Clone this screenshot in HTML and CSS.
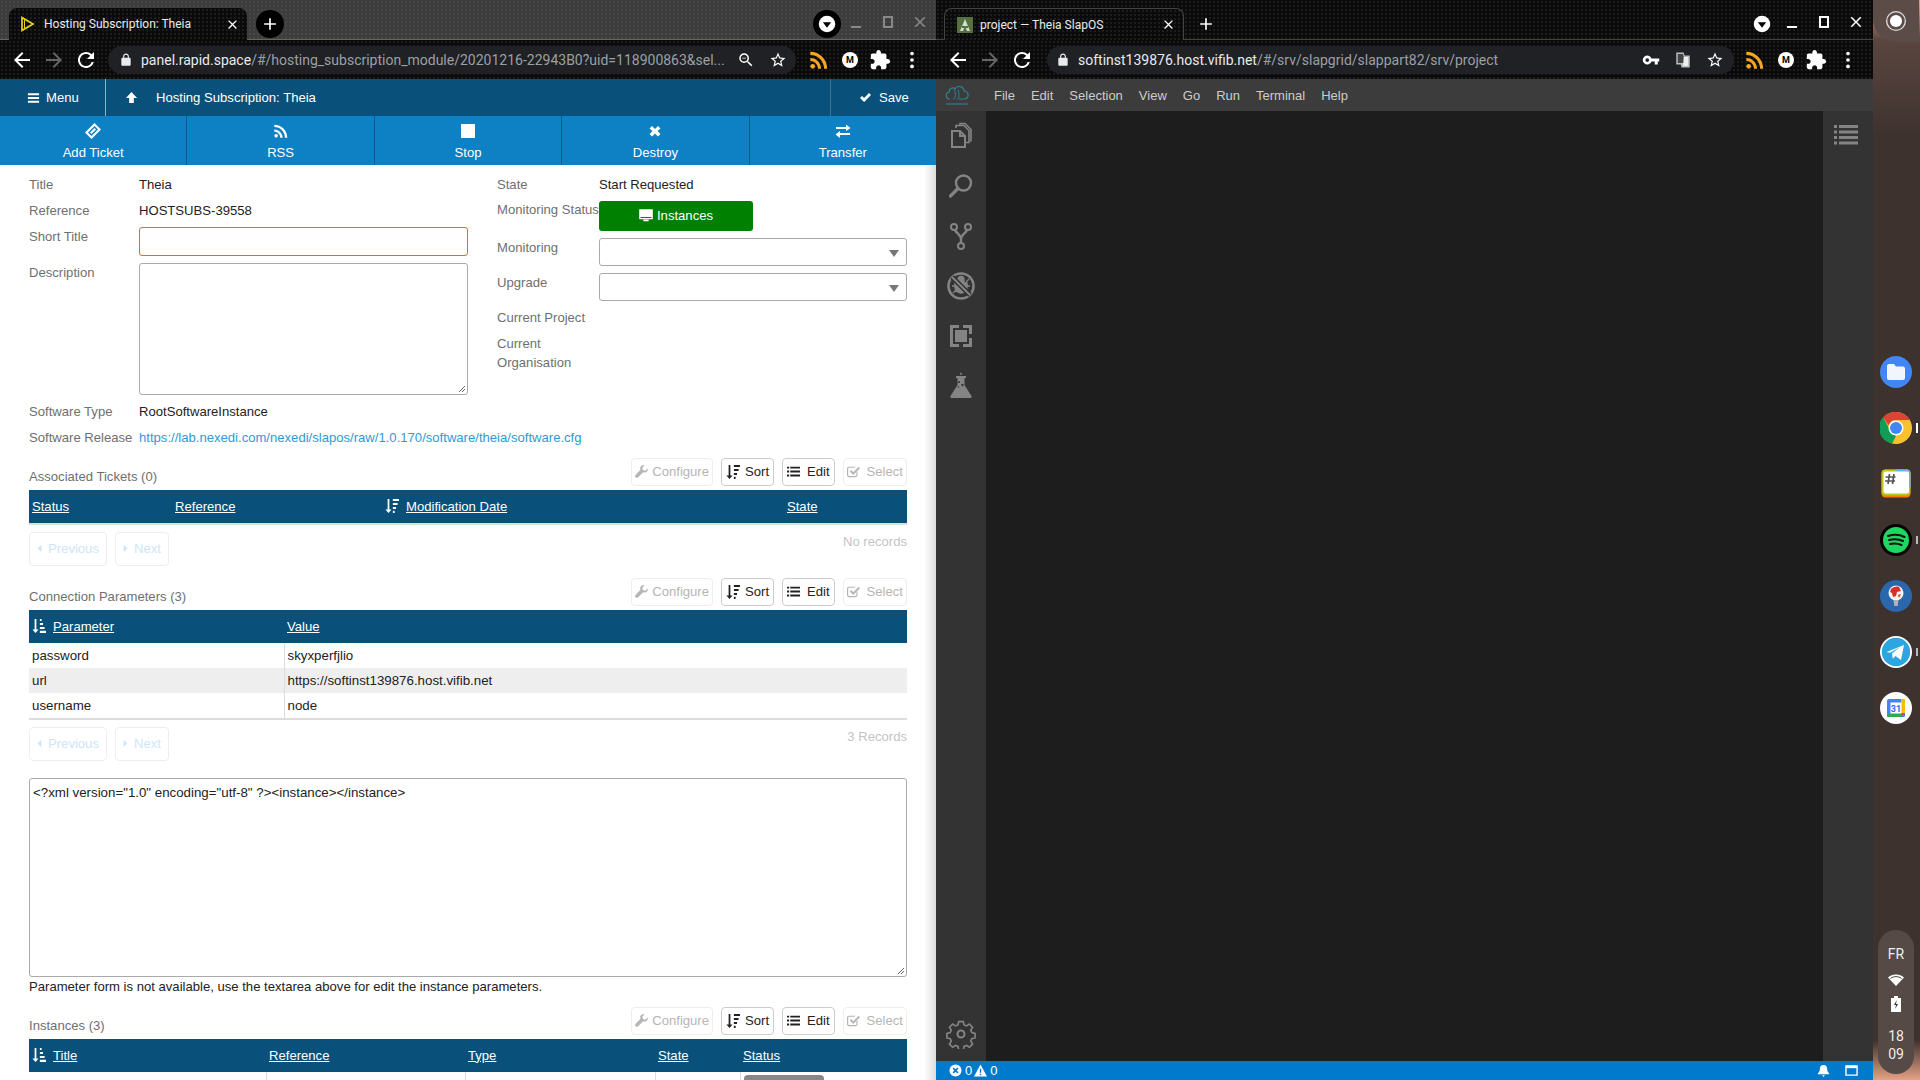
FILE: index.html
```html
<!DOCTYPE html>
<html lang="en">
<head>
<meta charset="utf-8">
<title>Hosting Subscription: Theia</title>
<link rel="stylesheet" href="styles.css">
</head>
<body>
<svg class="sprite" aria-hidden="true">
  <symbol id="back" viewBox="0 0 24 24"><path d="M20 11H7.83l5.59-5.59L12 4l-8 8 8 8 1.41-1.41L7.83 13H20v-2z"/></symbol>
  <symbol id="forward" viewBox="0 0 24 24"><path d="M12 4l-1.41 1.41L16.17 11H4v2h12.17l-5.58 5.59L12 20l8-8z"/></symbol>
  <symbol id="reload" viewBox="0 0 24 24"><path d="M17.65 6.35A7.958 7.958 0 0 0 12 4c-4.42 0-7.99 3.58-7.99 8s3.57 8 7.99 8c3.73 0 6.84-2.55 7.73-6h-2.08A5.99 5.99 0 0 1 12 18c-3.31 0-6-2.69-6-6s2.69-6 6-6c1.66 0 3.14.69 4.22 1.78L13 11h7V4l-2.35 2.35z"/></symbol>
  <symbol id="lock" viewBox="0 0 24 24"><path d="M18 8h-1V6c0-2.76-2.24-5-5-5S7 3.24 7 6v2H6c-1.1 0-2 .9-2 2v10c0 1.1.9 2 2 2h12c1.1 0 2-.9 2-2V10c0-1.1-.9-2-2-2zM9 6c0-1.66 1.34-3 3-3s3 1.34 3 3v2H9V6z"/></symbol>
  <symbol id="star" viewBox="0 0 24 24"><path d="M22 9.24l-7.19-.62L12 2 9.19 8.63 2 9.24l5.46 4.73L5.82 21 12 17.27 18.18 21l-1.63-7.03L22 9.24zM12 15.4l-3.76 2.27 1-4.28-3.32-2.88 4.38-.38L12 6.1l1.71 4.04 4.38.38-3.32 2.88 1 4.28L12 15.4z"/></symbol>
  <symbol id="puzzle" viewBox="0 0 24 24"><path d="M20.5 11H19V7c0-1.1-.9-2-2-2h-4V3.5C13 2.12 11.88 1 10.5 1S8 2.12 8 3.5V5H4c-1.1 0-1.99.9-1.99 2v3.8H3.5c1.49 0 2.7 1.21 2.7 2.7s-1.21 2.7-2.7 2.7H2V20c0 1.1.9 2 2 2h3.8v-1.5c0-1.49 1.21-2.7 2.7-2.7 1.49 0 2.7 1.21 2.7 2.7V22H17c1.1 0 2-.9 2-2v-4h1.5c1.38 0 2.5-1.12 2.5-2.5S21.88 11 20.5 11z"/></symbol>
  <symbol id="rss" viewBox="0 0 24 24"><circle cx="6.18" cy="17.82" r="2.18"/><path d="M4 4.44v2.83c7.03 0 12.73 5.7 12.73 12.73h2.83c0-8.59-6.97-15.56-15.56-15.56zm0 5.66v2.83c3.9 0 7.07 3.17 7.07 7.07h2.83c0-5.47-4.43-9.9-9.9-9.9z"/></symbol>
  <symbol id="search" viewBox="0 0 24 24"><path d="M15.5 14h-.79l-.28-.27A6.471 6.471 0 0 0 16 9.5 6.5 6.5 0 1 0 9.5 16c1.61 0 3.09-.59 4.23-1.57l.27.28v.79l5 4.99L20.49 19l-4.99-5zm-6 0C7.01 14 5 11.99 5 9.5S7.01 5 9.5 5 14 7.01 14 9.5 11.99 14 9.5 14z"/><path d="M7 9h5v1H7z"/></symbol>
  <symbol id="dots" viewBox="0 0 24 24"><circle cx="12" cy="5" r="2"/><circle cx="12" cy="12" r="2"/><circle cx="12" cy="19" r="2"/></symbol>
  <symbol id="close" viewBox="0 0 24 24"><path d="M19 6.41 17.59 5 12 10.59 6.41 5 5 6.41 10.59 12 5 17.59 6.41 19 12 13.41 17.59 19 19 17.59 13.41 12z"/></symbol>
  <symbol id="plus" viewBox="0 0 24 24"><path d="M19 13h-6v6h-2v-6H5v-2h6V5h2v6h6z"/></symbol>
  <symbol id="drop" viewBox="0 0 24 24"><circle cx="12" cy="12" r="9" fill="#fff"/><path d="M7.5 10h9L12 16z" fill="#000"/></symbol>
  <symbol id="key" viewBox="0 0 24 24"><path d="M12.65 10A6 6 0 1 0 12.65 14H17v4h4v-4h2v-4zM7 14.5a2.5 2.5 0 1 1 0-5 2.5 2.5 0 0 1 0 5z"/></symbol>
  <symbol id="translate" viewBox="0 0 24 24"><path d="M3 2h10l1 4h7v16H10l-1-4H3z" fill="#bbb"/><path d="M5 4h7l3 12H5z" fill="#444"/><path d="M13 8h6v12h-7z" fill="#eee"/></symbol>
  <symbol id="sort-d" viewBox="0 0 16 18"><path d="M3 1h2v12h2.5L4 17 .5 13H3z"/><path d="M9 1h7v2.4H9zM9 5.5h5.4v2.4H9zM9 10h3.6v2.4H9zM9 14.5h2v2.4H9z"/></symbol>
  <symbol id="sort-a" viewBox="0 0 16 18"><path d="M3 1h2v12h2.5L4 17 .5 13H3z"/><path d="M9 1h2v2.4H9zM9 5.500h3.600v2.400H9zM9 10h5.400v2.400H9zM9 14.500h7v2.400H9z"/></symbol>
  <symbol id="list" viewBox="0 0 16 16"><path d="M0 2h2.600v2.400H0zM4 2h12v2.400H4zM0 6.800h2.600v2.400H0zM4 6.800h12v2.400H4zM0 11.600h2.600V14H0zM4 11.600h12V14H4z"/></symbol>
  <symbol id="wrench" viewBox="0 0 16 16"><path d="M15.500 4.200 12.600 7 9.700 6.200 9 3.400 11.800.5C9.700-.2 7.500.5 6.700 2.400c-.5 1.100-.4 2.400.1 3.400L.8 12c-.9 1-.9 2.300 0 3.100.9.900 2.200.8 3.100 0l6.100-6.200c1.100.5 2.400.5 3.500 0 1.800-.9 2.600-2.800 2-4.700z"/></symbol>
  <symbol id="checkbox" viewBox="0 0 16 16"><path d="M2.500 2h8l-1.400 1.400H2.500c-.6 0-1 .4-1 1v8.100c0 .6.400 1 1 1h8.100c.6 0 1-.4 1-1V9l1.400-1.400v5c0 1.300-1.100 2.400-2.400 2.400H2.500C1.100 15 0 13.900 0 12.600V4.400C0 3.100 1.100 2 2.500 2z"/><path d="M14.400 2.300 16 3.900 7.700 12.200 3.400 7.900 5 6.300l2.700 2.700z"/></symbol>
  <symbol id="caret-l" viewBox="0 0 8 14"><path d="M7 1v12L1 7z"/></symbol>
  <symbol id="caret-r" viewBox="0 0 8 14"><path d="M1 1v12l6-6z"/></symbol>
</svg>

<main class="desktop">

  <section class="window win-left">
    <div class="tabstrip strip-grey">
      <div class="tab tab-left">
        <svg class="favicon" viewBox="0 0 16 16"><path d="M3 1.500v13L14 8z" fill="none" stroke="#e6d31c" stroke-width="1.700"/><path d="M5.500 4v8" stroke="#e6d31c" stroke-width="1"/></svg>
        <span class="tab-title">Hosting Subscription: Theia</span>
        <svg class="ico tab-x"><use href="#close"/></svg>
      </div>
      <span class="newtab"><svg class="ico"><use href="#plus"/></svg></span>
      <div class="winctl winctl-dim">
        <span class="dropcircle"><svg class="ico ico-drop"><use href="#drop"/></svg></span>
        <span class="ctl-min"></span>
        <span class="ctl-max"></span>
        <svg class="ico ctl-x"><use href="#close"/></svg>
      </div>
    </div>
    <div class="toolbar">
      <svg class="ico nav-i nav-first"><use href="#back"/></svg>
      <svg class="ico nav-i dim"><use href="#forward"/></svg>
      <svg class="ico nav-i"><use href="#reload"/></svg>
      <div class="omnibox omni-left">
        <svg class="ico lock"><use href="#lock"/></svg>
        <span class="url"><b>panel.rapid.space</b>/#/hosting_subscription_module/20201216-22943B0?uid=118900863&amp;sel...</span>
        <svg class="ico omni-i omni-push"><use href="#search"/></svg>
        <svg class="ico omni-i"><use href="#star"/></svg>
      </div>
      <svg class="ico ext rssi"><use href="#rss"/></svg>
      <span class="ext mcircle">M</span>
      <svg class="ico ext"><use href="#puzzle"/></svg>
      <svg class="ico ext"><use href="#dots"/></svg>
    </div>

    <header class="apphead">
      <div class="menu-btn"><svg class="fa-list" viewBox="0 0 14 12"><path d="M1 1h12v2H1zM1 5h12v2H1zM1 9h12v2H1z"/></svg>Menu</div>
      <div class="page-title">
        <svg class="up" viewBox="0 0 14 14"><path d="M7 1l6 6.500H9.500V13h-5V7.500H1z"/></svg>
        <span>Hosting Subscription: Theia</span>
      </div>
      <div class="save-btn"><svg class="check" viewBox="0 0 14 12"><path d="M1 6.500 3.200 4.300l2.300 2.300L10.800 1 13 3.200 5.500 11z"/></svg>Save</div>
    </header>
    <nav class="appnav">
      <div class="nav-cell"><svg class="nav-ico" viewBox="0 0 16 16"><path d="M9.500 0 16 6.500 6.500 16 0 9.500zM9.500 3 3 9.500 6.500 13 13 6.500z" fill-rule="evenodd"/><path d="M9.500 5 11 6.500 6.500 11 5 9.500z"/></svg><span>Add Ticket</span></div>
      <div class="nav-cell"><svg class="nav-ico nav-rss" viewBox="0 0 24 24"><use href="#rss"/></svg><span>RSS</span></div>
      <div class="nav-cell"><svg class="nav-ico" viewBox="0 0 16 16"><rect x="1" y="1" width="14" height="14"/></svg><span>Stop</span></div>
      <div class="nav-cell"><svg class="nav-ico" viewBox="0 0 16 16"><path d="M5 3 8 6l3-3 2.500 2.500-3 2.500 3 3L11 13.500l-3-3-3 3L2.500 11l3-3-3-2.500z"/></svg><span>Destroy</span></div>
      <div class="nav-cell"><svg class="nav-ico" viewBox="0 0 16 16"><path d="M1 4h10V1.500L15.500 5 11 8V6H1zM15 10H5V8L.5 11.500 5 15v-3h10z"/></svg><span>Transfer</span></div>
    </nav>

    <div class="page">
      <div class="form">
        <div class="col">
          <div class="row row-text"><span class="lbl">Title</span><span class="val">Theia</span></div>
          <div class="row row-text"><span class="lbl">Reference</span><span class="val">HOSTSUBS-39558</span></div>
          <div class="row row-short"><span class="lbl lbl-up">Short Title</span><span class="input input-focus"></span></div>
          <div class="row row-desc"><span class="lbl lbl-up">Description</span><span class="input textarea"><svg class="grip" viewBox="0 0 8 8"><path d="M7 1 1 7M7 4 4 7" stroke="#666" fill="none"/></svg></span></div>
        </div>
        <div class="col col-r">
          <div class="row row-text"><span class="lbl">State</span><span class="val">Start Requested</span></div>
          <div class="row row-status"><span class="lbl">Monitoring Status</span><span class="btn-green"><svg class="monitor" viewBox="0 0 16 16"><path d="M1 1h14v10H1z" fill="none" stroke="#fff" stroke-width="1.500"/><path d="M1 1h14v8H1zM5 12h6v2H5z" fill="#fff"/></svg>Instances</span></div>
          <div class="row row-sel"><span class="lbl lbl-flat">Monitoring</span><span class="select"><i class="tri"></i></span></div>
          <div class="row row-sel"><span class="lbl lbl-flat">Upgrade</span><span class="select"><i class="tri"></i></span></div>
          <div class="row row-sel"><span class="lbl lbl-flat">Current Project</span></div>
          <div class="row row-org"><span class="lbl lbl-two">Current<br>Organisation</span></div>
        </div>
      </div>
      <div class="wide-rows">
        <div class="row"><span class="lbl">Software Type</span><span class="val">RootSoftwareInstance</span></div>
        <div class="row"><span class="lbl">Software Release</span><a class="link">https://lab.nexedi.com/nexedi/slapos/raw/1.0.170/software/theia/software.cfg</a></div>
      </div>

      <div class="sec sec-first">
        <div class="sec-head">
          <span class="sec-title">Associated Tickets (0)</span>
          <div class="tools">
            <span class="tbtn off"><svg class="ti"><use href="#wrench"/></svg>Configure</span>
            <span class="tbtn"><svg class="ti ti-sort"><use href="#sort-d"/></svg>Sort</span>
            <span class="tbtn"><svg class="ti"><use href="#list"/></svg>Edit</span>
            <span class="tbtn off"><svg class="ti"><use href="#checkbox"/></svg>Select</span>
          </div>
        </div>
        <table class="tbl t-tickets">
          <thead><tr>
            <th class="c1"><u>Status</u></th><th class="c2"><u>Reference</u></th>
            <th class="c3"><svg class="th-sort"><use href="#sort-d"/></svg><u>Modification Date</u></th><th><u>State</u></th>
          </tr></thead>
        </table>
        <div class="tbl-end"></div>
        <div class="pager">
          <span class="pbtn"><svg class="car"><use href="#caret-l"/></svg>Previous</span>
          <span class="pbtn"><svg class="car"><use href="#caret-r"/></svg>Next</span>
          <span class="records">No records</span>
        </div>
      </div>

      <div class="sec">
        <div class="sec-head">
          <span class="sec-title">Connection Parameters (3)</span>
          <div class="tools">
            <span class="tbtn off"><svg class="ti"><use href="#wrench"/></svg>Configure</span>
            <span class="tbtn"><svg class="ti ti-sort"><use href="#sort-d"/></svg>Sort</span>
            <span class="tbtn"><svg class="ti"><use href="#list"/></svg>Edit</span>
            <span class="tbtn off"><svg class="ti"><use href="#checkbox"/></svg>Select</span>
          </div>
        </div>
        <table class="tbl t-params">
          <thead><tr><th class="c1"><svg class="th-sort"><use href="#sort-a"/></svg><u>Parameter</u></th><th><u>Value</u></th></tr></thead>
          <tbody>
            <tr><td>password</td><td>skyxperfjlio</td></tr>
            <tr class="alt"><td>url</td><td>https://softinst139876.host.vifib.net</td></tr>
            <tr><td>username</td><td>node</td></tr>
          </tbody>
        </table>
        <div class="tbl-end"></div>
        <div class="pager">
          <span class="pbtn"><svg class="car"><use href="#caret-l"/></svg>Previous</span>
          <span class="pbtn"><svg class="car"><use href="#caret-r"/></svg>Next</span>
          <span class="records">3 Records</span>
        </div>
      </div>

      <div class="xml">&lt;?xml version="1.0" encoding="utf-8" ?&gt;&lt;instance&gt;&lt;/instance&gt;<svg class="grip" viewBox="0 0 8 8"><path d="M7 1 1 7M7 4 4 7" stroke="#666" fill="none"/></svg></div>
      <p class="note">Parameter form is not available, use the textarea above for edit the instance parameters.</p>

      <div class="sec sec-inst">
        <div class="sec-head">
          <span class="sec-title">Instances (3)</span>
          <div class="tools">
            <span class="tbtn off"><svg class="ti"><use href="#wrench"/></svg>Configure</span>
            <span class="tbtn"><svg class="ti ti-sort"><use href="#sort-d"/></svg>Sort</span>
            <span class="tbtn"><svg class="ti"><use href="#list"/></svg>Edit</span>
            <span class="tbtn off"><svg class="ti"><use href="#checkbox"/></svg>Select</span>
          </div>
        </div>
        <table class="tbl t-inst">
          <thead><tr>
            <th class="c1"><svg class="th-sort"><use href="#sort-a"/></svg><u>Title</u></th><th class="c2"><u>Reference</u></th><th class="c3"><u>Type</u></th><th class="c4"><u>State</u></th><th><u>Status</u></th>
          </tr></thead>
          <tbody><tr><td></td><td></td><td></td><td></td><td><span class="badge"></span></td></tr></tbody>
        </table>
      </div>
    </div>
  </section>

  <section class="window win-right">
    <div class="tabstrip strip-black">
      <div class="tab tab-right">
        <svg class="favicon" viewBox="0 0 16 16"><rect width="16" height="16" fill="#56703f"/><path d="M8 2 3 14h3l2-5 2 5h3z" fill="#cfe0d0"/><rect x="5" y="9" width="6" height="2" fill="#56703f"/></svg>
        <span class="tab-title">project — Theia SlapOS</span>
        <svg class="ico tab-x"><use href="#close"/></svg>
      </div>
      <svg class="ico newtab-plain"><use href="#plus"/></svg>
      <div class="winctl">
        <svg class="ico ico-drop"><use href="#drop"/></svg>
        <span class="ctl-min"></span>
        <span class="ctl-max"></span>
        <svg class="ico ctl-x"><use href="#close"/></svg>
      </div>
    </div>
    <div class="toolbar">
      <svg class="ico nav-i nav-first"><use href="#back"/></svg>
      <svg class="ico nav-i dim"><use href="#forward"/></svg>
      <svg class="ico nav-i"><use href="#reload"/></svg>
      <div class="omnibox omni-right">
        <svg class="ico lock"><use href="#lock"/></svg>
        <span class="url"><b>softinst139876.host.vifib.net</b>/#/srv/slapgrid/slappart82/srv/project</span>
        <svg class="ico omni-i omni-push"><use href="#key"/></svg>
        <svg class="ico omni-i"><use href="#translate"/></svg>
        <svg class="ico omni-i"><use href="#star"/></svg>
      </div>
      <svg class="ico ext rssi"><use href="#rss"/></svg>
      <span class="ext mcircle">M</span>
      <svg class="ico ext"><use href="#puzzle"/></svg>
      <svg class="ico ext"><use href="#dots"/></svg>
    </div>

    <div class="theia">
      <div class="menubar">
        <svg class="slap" viewBox="0 0 26 26"><path d="M6 17C1.500 17 1 11 5 10c0-4 4-5 6-3 2-4 9-3 9 2 5 0 6 8 0 8h-5" fill="none" stroke="#2a8494" stroke-width="1.200"/><path d="M9 17c3 0 3-6 1-9M13 17c3 0 2-6 1-9" fill="none" stroke="#2a8494" stroke-width="1"/><rect x="2" y="21" width="22" height="2" fill="#2a8494" opacity=".55"/></svg>
        <span class="mi">File</span><span class="mi">Edit</span><span class="mi">Selection</span><span class="mi">View</span><span class="mi">Go</span><span class="mi">Run</span><span class="mi">Terminal</span><span class="mi">Help</span>
      </div>
      <div class="theia-main">
        <aside class="activity">
          <svg class="act" viewBox="0 0 28 28"><path d="M5 9h8l5 5v11H5z M13 9v5h5" fill="none" stroke-width="2"/><path d="M9 6V3.500h8l5 5v12h-3M13 3V1.500h5l6 6v12" fill="none" stroke-width="1.600"/></svg>
          <svg class="act" viewBox="0 0 28 28"><circle cx="16.500" cy="11" r="7.500" fill="none" stroke-width="2.400"/><path d="M11 16.500 3.500 24" fill="none" stroke-width="3.200" stroke-linecap="round"/></svg>
          <svg class="act" viewBox="0 0 28 28"><circle cx="7" cy="5" r="3" fill="none" stroke-width="2"/><circle cx="21" cy="5" r="3" fill="none" stroke-width="2"/><circle cx="14" cy="24" r="3" fill="none" stroke-width="2"/><path d="M8 8c1 3 6 5 6 9v4M20 8c-1 3-6 5-6 9" fill="none" stroke-width="2.400"/></svg>
          <svg class="act act-big" viewBox="0 0 30 30"><circle cx="15" cy="15" r="12.500" fill="none" stroke-width="2.600"/><path d="M12 8.500a3 3 0 0 1 6 0v2h-6zM9 12h12c1 4 0 9-6 10-6-1-7-6-6-10zM7 8l3 3M23 8l-3 3M6 15h3M24 15h-3M7 22l3-3M23 22l-3-3" stroke-width="1.300"/><path d="M6 6l18 18" fill="none" stroke="#333" stroke-width="5"/><path d="M6 6l18 18" fill="none" stroke-width="2"/></svg>
          <svg class="act" viewBox="0 0 28 28"><path d="M3 3h9v3H6v16h6v3H3zM16 3h9v9h-3V6h-6zM25 16v9h-9v-3h6v-6z" class="solid"/><rect x="8" y="8" width="12" height="12" class="solid"/></svg>
          <svg class="act" viewBox="0 0 28 28"><path d="M9 4h10v2h-1.500v7l7 11c.600 1-.100 2-1 2H4.500c-.900 0-1.600-1-1-2l7-11V6H9z" class="solid"/><circle cx="14" cy="1.800" r="1" class="solid"/><circle cx="12" cy="10" r="1" fill="#333" class="solid"/><circle cx="15.500" cy="13" r="1.200" fill="#333" class="solid"/><circle cx="11.500" cy="15" r=".8" fill="#333" class="solid"/></svg>
          <svg class="act act-gear" viewBox="0 0 30 30"><path d="M12.500 1.500h5l.8 3.600 2.700 1.100 3.100-2 3.500 3.500-2 3.100 1.100 2.700 3.600.8v5l-3.600.8-1.100 2.700 2 3.100-3.500 3.500-3.100-2-2.700 1.100-.8 3.600h-5l-.8-3.600-2.700-1.100-3.100 2-3.500-3.500 2-3.100-1.100-2.700-3.600-.8v-5l3.600-.8 1.100-2.700-2-3.100 3.500-3.500 3.100 2 2.700-1.100z" fill="none" stroke-width="1.800" transform="translate(1.200 1.200) scale(.92)"/><circle cx="15" cy="15" r="3.500" fill="none" stroke-width="2"/></svg>
        </aside>
        <div class="editor"></div>
        <aside class="rightbar">
          <svg class="outline" viewBox="0 0 24 20"><path d="M0 0h3v3H0zM5 0h19v3H5zM0 5.500h3v3H0zM5 5.500h19v3H5zM0 11h3v3H0zM5 11h19v3H5zM0 16.500h3v3H0zM5 16.500h19v3H5z"/></svg>
        </aside>
      </div>
      <footer class="statusbar">
        <svg class="st st-first" viewBox="0 0 14 14"><circle cx="7" cy="7" r="6.500" fill="#fff"/><path d="m4.500 4.500 5 5m0-5-5 5" stroke="#007acc" stroke-width="1.800"/></svg><span class="st-n">0</span>
        <svg class="st" viewBox="0 0 14 14"><path d="M7 .5 14 13.500H0z" fill="#fff"/><path d="M7 5v4.500M7 10.500v1.500" stroke="#007acc" stroke-width="1.500"/></svg><span class="st-n">0</span>
        <svg class="st st-bell" viewBox="0 0 14 14"><path d="M7 1c-3 0-4 2-4 5 0 2-1 3-2 4v1h12v-1c-1-1-2-2-2-4 0-3-1-5-4-5zM5.500 12h3L7 14z" fill="#fff"/></svg>
        <svg class="st st-win" viewBox="0 0 14 12"><path d="M1 1h12v10H1z" fill="none" stroke="#fff" stroke-width="1.500"/><path d="M1 1h12v2.500H1z" fill="#fff"/></svg>
      </footer>
    </div>
  </section>

  <aside class="shelf">
    <div class="launcher"><svg viewBox="0 0 20 20" class="launch-i"><circle cx="10" cy="10" r="8.500" fill="none" stroke="#ddd" stroke-width="1.200"/><circle cx="10" cy="10" r="5.500" fill="#fff"/></svg></div>
    <div class="apps">
      <svg class="app" viewBox="0 0 32 32"><circle cx="16" cy="16" r="16" fill="#4285f4"/><path d="M7 10c0-1 .8-2 2-2h5l2 2.500h7c1 0 2 1 2 2V22c0 1-1 2-2 2H9c-1.200 0-2-1-2-2z" fill="#f1f5fd"/></svg>
      <span class="app-wrap"><svg class="app" viewBox="0 0 32 32"><circle cx="16" cy="16" r="16" fill="#fbc02d"/><path d="M16 0a16 16 0 0 1 13.900 8H16a8 8 0 0 0-7.500 5.200L3 5.200A16 16 0 0 1 16 0z" fill="#db4437"/><path d="M3 5.200l6 10.800 7 8-3.800 7.600A16 16 0 0 1 3 5.200z" fill="#0f9d58"/><circle cx="16" cy="16" r="7.500" fill="#fff"/><circle cx="16" cy="16" r="6" fill="#4285f4"/></svg><i class="pip pip-on"></i></span>
      <svg class="app" viewBox="0 0 32 32"><rect x="1.500" y="1.500" width="29" height="28" rx="4" fill="#f57c00"/><rect x="1.500" y="1.500" width="29" height="26" rx="4" fill="#b4c91a"/><path d="M16 1.500h10.500a4 4 0 0 1 4 4V20H16z" fill="#64b5f6"/><rect x="3.500" y="3.500" width="25.500" height="22" rx="2" fill="#fff"/><path d="M9.500 6 8 16M14 6l-1.500 10M5.500 9h10M5 13h10" stroke="#555" stroke-width="1.700" fill="none"/></svg>
      <span class="app-wrap"><svg class="app" viewBox="0 0 32 32"><circle cx="16" cy="16" r="16" fill="#000"/><circle cx="16" cy="16" r="13" fill="#1ed760"/><path d="M8 12c5-1.500 12-1.300 16.500 1M9 16c4-1 10-1 14 1M10 20c3.500-.800 8-.600 11.500 1" stroke="#111" stroke-width="2" stroke-linecap="round" fill="none"/></svg><i class="pip"></i></span>
      <svg class="app" viewBox="0 0 32 32"><circle cx="16" cy="16" r="16" fill="#2a67ad"/><circle cx="16" cy="13" r="7.500" fill="#f4f4f4"/><path d="M11 9c2-2 6-3 8-2l2 4-4 1-1 4-3 1-1-4-2-1zM18 15l3-1-2 4z" fill="#d93025"/><path d="M13.500 20h5l-.8 6h-3.400z" fill="#b0b4ba"/></svg>
      <span class="app-wrap"><svg class="app" viewBox="0 0 32 32"><circle cx="16" cy="16" r="16" fill="#fff"/><circle cx="16" cy="16" r="14.200" fill="#2ca5e0"/><path d="M6.500 16 24 9l-3 15-5.500-4-2.700 2.800-.8-5.300 8-6.500-10 5.800z" fill="#fff"/></svg><i class="pip"></i></span>
      <svg class="app" viewBox="0 0 32 32"><circle cx="16" cy="16" r="16" fill="#fff"/><rect x="7" y="7" width="18" height="18" rx="1.500" fill="#4285f4"/><path d="M21 7h4v4h-4z" fill="#fbbc04"/><path d="M21 11h4v10h-4z" fill="#fbbc04"/><path d="M7 21h14v4H8.500A1.500 1.500 0 0 1 7 23.500z" fill="#34a853"/><path d="M21 21h4l-4 4z" fill="#ea4335"/><rect x="10.500" y="10.500" width="11" height="11" fill="#fff"/><text x="16" y="19.500" class="cal">31</text></svg>
    </div>
    <div class="tray">
      <span class="tray-lang">FR</span>
      <svg class="tray-i" viewBox="0 0 16 12"><path d="M0 3.500C4-.5 12-.5 16 3.500L8 12z" fill="#fff"/><path d="M2.500 4.500c3-2.500 8-2.500 11 0" stroke="#4a3f3b" stroke-width="1" fill="none"/></svg>
      <svg class="tray-b" viewBox="0 0 10 16"><path d="M3 0h4v2h3v14H0V2h3z" fill="#fff"/><path d="M5.800 4 3 9h2l-.800 4L7 8H5z" fill="#333"/></svg>
      <span class="tray-time">18<br>09</span>
    </div>
  </aside>
</main>
</body>
</html>
```

FILE: styles.css
```css
* { box-sizing: border-box; }
html, body { margin: 0; height: 100%; overflow: hidden; }
body { font-family: "Liberation Sans", Arial, sans-serif; font-size: 13.1px; background: #3d322e; }
.sprite { display: none; }
.desktop { position: relative; width: 1920px; height: 1080px; overflow: hidden; }

.window { position: absolute; top: 0; height: 1080px; display: flex; flex-direction: column; overflow: hidden; }
.win-left { left: 0; width: 936px; }
.win-right { left: 936px; width: 937px; }

.ico { display: block; width: 20px; height: 20px; fill: #fff; flex: none; }

/* browser chrome */
.tabstrip { height: 40px; display: flex; align-items: flex-end; position: relative; flex: none; }
.strip-grey { background-color: #3d3d3d; background-image: radial-gradient(rgba(255,255,255,.05) 1px, transparent 1.2px); background-size: 4px 4px; border-bottom: 1px solid #666; }
.strip-black { background-color: #0a0a0a; background-image: radial-gradient(#1d1d1d 1px, transparent 1.2px); background-size: 4px 4px; border-bottom: 1px solid #444; }
.tab { height: 32px; display: flex; align-items: center; border-radius: 8px 8px 0 0; color: #e8eaed; font: 12px Roboto, sans-serif; background-color: #0a0a0a; background-image: radial-gradient(#1d1d1d 1px, transparent 1.2px); background-size: 4px 4px; position: relative; top: 1px; }
.tab-left { margin-left: 9px; width: 238px; padding-left: 10px; }
.tab-right { margin-left: 8px; width: 240px; padding-left: 12px; border: 1px solid #444; border-bottom: none; }
.favicon { width: 16px; height: 16px; flex: none; margin-right: 7px; }
.tab-left .favicon { margin-right: 9px; }
.tab-title { white-space: nowrap; }
.tab-x { width: 15px; height: 15px; margin-left: auto; margin-right: 7px; }
.newtab { width: 28px; height: 28px; border-radius: 50%; background: #000; margin: 8px 0 0 9px; display: flex; align-items: center; justify-content: center; align-self: center; }
.newtab-plain { margin: 8px 0 0 12px; align-self: center; }
.winctl { margin: 8px 0 0 auto; display: flex; align-items: center; align-self: center; padding-right: 7px; }
.dropcircle { width: 28px; height: 28px; border-radius: 50%; background: #000; display: flex; align-items: center; justify-content: center; margin-right: 1px; }
.ico-drop { width: 22px; height: 22px; }
.ctl-min { width: 10px; height: 2px; background: #fff; margin: 6px 0 0 9px; }
.ctl-max { width: 10px; height: 12px; border: 2px solid #fff; margin: -4px 0 0 22px; }
.ctl-x { width: 18px; height: 18px; margin: -4px 0 0 18px; }
.winctl-dim .ctl-min { background: #888; margin-left: 9px; }
.winctl-dim .ctl-max { border-color: #888; }
.winctl-dim .ctl-x { fill: #888; }
.win-right .winctl { padding-right: 8px; }
.win-right .ico-drop { margin-right: 5px; }

.toolbar { height: 39px; flex: none; display: flex; align-items: center; background-color: #0a0a0a; background-image: radial-gradient(#1d1d1d 1px, transparent 1.2px); background-size: 4px 4px; padding-right: 11px; }
.nav-i { width: 24px; height: 24px; margin-right: 8px; }
.nav-first { margin-left: 10px; }
.nav-i.dim { fill: #666; }
.omnibox { height: 28px; border-radius: 14px; background: #202124; display: flex; align-items: center; padding: 0 9px 0 10px; color: #9aa0a6; font: 14px Roboto, sans-serif; flex: none; margin-left: 2px; }
.omni-left { width: 688px; margin-right: 10px; }
.omni-right { width: 687px; margin-right: 8px; margin-left: 5px; padding-right: 10px; padding-left: 8px; }
.lock { width: 14px; height: 14px; margin: 0 8px 0 1px; fill: #e8eaed; }
.url { white-space: nowrap; color: #9aa0a6; font-size: 14px; }
.url b { font-weight: 400; color: #e8eaed; }
.omni-i { width: 18px; height: 18px; margin-left: 14px; }
.omni-push { margin-left: auto; }
.ext { width: 22px; height: 22px; margin-right: 10px; }
.ext:last-child { margin-right: 0; }
.rssi { fill: #f6a623; width: 26px; height: 26px; margin-right: 8px; }
.mcircle { width: 16px; height: 16px; flex: none; border-radius: 50%; background: #fff; color: #000; font: 700 9px/16px Roboto, sans-serif; text-align: center; margin: 0 11px 0 2px; }

/* app bars */
.apphead { height: 37px; flex: none; background: #09517a; color: #fff; display: flex; align-items: stretch; line-height: 36px; }
.menu-btn { width: 106px; display: flex; align-items: center; padding-left: 27px; border-right: 1px solid #8fb2c8; }
.fa-list { width: 13px; height: 12px; fill: #fff; margin-right: 6px; }
.page-title { display: flex; align-items: center; flex: 1; padding-left: 19px; }
.up { width: 13px; height: 13px; fill: #fff; margin-right: 18px; }
.save-btn { width: 106px; border-left: 1px solid #3a7598; display: flex; align-items: center; padding-left: 28px; }
.check { width: 13px; height: 11px; fill: #fff; margin-right: 7px; }
.appnav { height: 49px; flex: none; background: #0e80c4; display: flex; color: #fff; }
.nav-cell { flex: 1; display: flex; flex-direction: column; align-items: center; border-right: 1px solid #0a5a8c; padding-top: 7px; }
.nav-cell:last-child { border-right: none; }
.nav-cell span { margin-top: 6px; line-height: 16px; }
.nav-ico { width: 16px; height: 16px; fill: #fff; display: block; }
.nav-rss { width: 20px; height: 20px; margin: -2px 0; }

/* page */
.page { flex: 1; overflow: hidden; background: linear-gradient(to right, #fff 924px, #dcdcdc 936px); padding: 6px 29px 0; color: #222; }
.form { display: flex; }
.col { width: 439px; }
.col-r { margin-left: 29px; width: 410px; }
.row { display: flex; height: 26px; line-height: 26px; }
.row-text { line-height: 27px; }
.lbl { width: 110px; flex: none; color: #6f6f6f; white-space: nowrap; }
.col-r .lbl { width: 102px; }
.val { color: #222; }
.row-short { height: 29px; margin-top: 4px; }
.row-desc { height: 132px; margin-top: 7px; }
.lbl-up { line-height: 20px; }
.input { display: block; width: 329px; height: 100%; border: 1px solid #aaa; border-radius: 3px; background: #fff; position: relative; }
.input-focus { border: 1.500px solid #f60; }
.grip { position: absolute; right: 1px; bottom: 1px; width: 8px; height: 8px; }
.row-status { height: 34px; }
.btn-green { margin-top: 4px; height: 30px; width: 154px; background: #008000; color: #fff; border-radius: 3px; display: flex; align-items: center; justify-content: center; line-height: 30px; }
.monitor { width: 14px; height: 14px; margin-right: 4px; }
.row-sel { height: 28px; margin-top: 7px; }
.row-sel .lbl, .lbl-flat { line-height: 20px; }
.select { width: 308px; height: 28px; border: 1px solid #aaa; border-radius: 3px; position: relative; display: block; background: #fff; }
.tri { position: absolute; right: 7px; top: 11px; border: 5.500px solid transparent; border-top: 7px solid #777; border-bottom: 0; }
.row-org { margin-top: 6px; height: 40px; }
.col-r .row-sel:nth-child(5) { height: 20px; }
.lbl-two { line-height: 19px; }
.wide-rows { margin-top: 3.500px; }
.link { color: #2f9ad8; white-space: nowrap; }

.sec { margin-top: 12px; }
.sec-first { margin-top: 7px; }
.sec-head { height: 32px; display: flex; justify-content: space-between; }
.sec-title { color: #6f6f6f; line-height: 20px; padding-top: 9px; }
.tools { display: flex; gap: 8px; align-items: flex-start; }
.tbtn { height: 28px; border: 1px solid #ccc; border-radius: 4px; padding: 0 4px; display: flex; align-items: center; color: #222; background: #fff; }
.tbtn.off { border-color: #eee; color: #b5b5b5; padding: 0 3px; }
.tbtn.off .ti { fill: #b5b5b5; }
.tbtn.off:first-child .ti { margin-right: 4px; }
.ti { width: 13px; height: 13px; margin-right: 7px; fill: #222; flex: none; }
.ti-sort { width: 14px; height: 16px; margin-right: 5px; }

.tbl { width: 878px; border-collapse: collapse; table-layout: fixed; }
.tbl th { height: 33px; background: #09517a; color: #fff; text-align: left; font-weight: 400; padding: 0 3px; white-space: nowrap; }
.tbl td { height: 25px; padding: 0 3px; color: #222; border-right: 1px solid #ddd; font-size: 13.3px; }
.tbl td:last-child { border-right: none; }
.tbl .alt td { background: #eee; }
.th-sort { width: 14px; height: 16px; fill: #fff; margin-right: 7px; vertical-align: -3px; }
.t-tickets .c1 { width: 143px; }
.t-tickets .c2 { width: 210px; }
.t-tickets .c3 { width: 402px; }
.t-params .c1 { width: 255px; }
.t-inst .c1 { width: 237px; }
.t-inst .c2 { width: 199px; }
.t-inst .c3 { width: 190px; }
.t-inst .c4 { width: 85px; }
.tbl-end { height: 2px; width: 878px; background: #ddd; }
.pager { display: flex; gap: 8px; margin-top: 7px; height: 34px; color: #cce6f7; position: relative; }
.pbtn { height: 34px; border: 1px solid #eee; border-radius: 4px; padding: 0 7px; display: flex; align-items: center; }
.car { width: 5px; height: 9px; fill: #cce6f7; margin-right: 6px; }
.records { margin-left: auto; color: #c4c4c4; line-height: 20px; }
.xml { position: relative; margin-top: 17px; width: 878px; height: 199px; border: 1px solid #aaa; border-radius: 3px; padding: 6px 3px; color: #222; font-size: 13.3px; }
.note { margin: 0; line-height: 20px; color: #222; }
.sec-inst { margin-top: 10px; }
.badge { display: block; width: 80px; height: 8px; background: #888; border-radius: 4px 4px 0 0; margin-top: 3px; }
.t-inst td { vertical-align: top; padding-top: 0; }

/* theia */
.theia { flex: 1; display: flex; flex-direction: column; min-height: 0; }
.menubar { height: 32px; flex: none; background: #3c3c3c; display: flex; align-items: center; color: #ccc; font-size: 13px; }
.slap { width: 26px; height: 26px; margin: 0 24px 0 8px; }
.mi { margin-right: 16px; }
.theia-main { flex: 1; display: flex; min-height: 0; }
.activity { width: 50px; flex: none; background: #333; display: flex; flex-direction: column; align-items: center; padding: 11px 0 12px; }
.act { width: 28px; height: 28px; margin-bottom: 22px; stroke: #848484; fill: #848484; flex: none; }
.act-big { width: 30px; height: 30px; margin-bottom: 21px; margin-top: -1px; }
.act .solid { stroke: none; }
.act-gear { width: 30px; height: 30px; margin: auto 0 0; }
.editor { flex: 1; background: #1d1d1d; }
.rightbar { width: 50px; flex: none; background: #333; padding: 14px 0 0 11px; }
.outline { width: 24px; height: 20px; fill: #848484; display: block; }
.statusbar { height: 19px; flex: none; background: #007acc; color: #fff; display: flex; align-items: center; font-size: 13px; padding-right: 15px; }
.st { width: 13px; height: 13px; flex: none; }
.st-first { margin-left: 13px; }
.st-n { margin: 0 2px 0 3px; }
.st-bell { margin-left: auto; }
.st-win { margin-left: 15px; }

/* shelf */
.shelf { position: absolute; right: 0; top: 0; width: 47px; height: 1080px; padding-right: 1px; background: linear-gradient(to bottom, #e5a184 0, #5a4540 40px, #3d322e 140px, #3d322e 1040px, #e5a184 1080px); display: flex; flex-direction: column; align-items: center; }
.launcher { width: 46px; height: 42px; background: #5b4c48; border-radius: 0 0 0 23px; display: flex; align-items: center; justify-content: center; flex: none; }
.launch-i { width: 22px; height: 22px; }
.apps { margin-top: 314px; display: flex; flex-direction: column; gap: 24px; flex: none; }
.app { width: 32px; height: 32px; display: block; }
.app-wrap { position: relative; display: block; }
.pip { position: absolute; right: -6px; top: 12px; width: 2px; height: 8px; background: #bbb; }
.pip-on { background: #fff; height: 10px; top: 11px; }
.cal { font: 700 9px Roboto, sans-serif; fill: #1a73e8; text-anchor: middle; }
.tray { margin-top: auto; margin-bottom: 6px; width: 36px; height: 144px; border-radius: 18px; background: #554a46; display: flex; flex-direction: column; align-items: center; color: #eee; font: 14px/18px Roboto, sans-serif; padding-top: 15px; flex: none; }
.tray-i { width: 16px; height: 12px; margin-top: 11px; flex: none; }
.tray-b { width: 10px; height: 16px; margin-top: 10px; flex: none; }
.tray-time { margin-top: 15px; text-align: center; }
```
